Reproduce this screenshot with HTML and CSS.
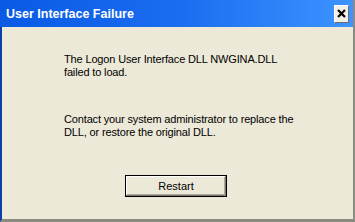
FILE: index.html
```html
<!DOCTYPE html>
<html>
<head>
<meta charset="utf-8">
<link rel="stylesheet" href="styles.css">
</head>
<body>
<div class="window">
  <div class="titlebar">
    <span class="title">User Interface Failure</span>
    <span class="close"><svg width="9" height="9" viewBox="0 0 9 9"><path d="M1 1L8 8M8 1L1 8" stroke="#000" stroke-width="2.2" fill="none"/></svg></span>
  </div>
  <div class="content">
    <p class="msg">The Logon User Interface DLL NWGINA.DLL<br>failed to load.</p>
    <p class="msg msg2">Contact your system administrator to replace the<br>DLL, or restore the original DLL.</p>
    <div class="actions">
      <div class="button">Restart</div>
    </div>
  </div>
</div>
</body>
</html>
```
FILE: styles.css
```css
html, body {
  margin: 0;
  padding: 0;
  width: 355px;
  height: 222px;
  overflow: hidden;
  background: #ECE9D8;
}
.window {
  width: 355px;
  height: 222px;
  box-sizing: border-box;
  display: flex;
  flex-direction: column;
  border-left: 2px solid #0A3FA8;
  border-right: 2px solid #8A8C80;
  border-bottom: 3px solid #8A8C80;
  background: #ECE9D8;
  font-family: "Liberation Sans", Arial, sans-serif;
}
.titlebar {
  height: 27px;
  flex: none;
  display: flex;
  align-items: center;
  justify-content: space-between;
  padding: 0 4px 0 6px;
  margin-left: -2px;
  background: linear-gradient(to right, #0A5AE4 0%, #1A6CF0 50%, #3D93FF 100%);
}
.title {
  color: #fff;
  font-weight: bold;
  font-size: 12.5px;
}
.close {
  width: 15px;
  height: 18px;
  box-sizing: border-box;
  background: #F2F0E6;
  border-top: 1px solid #fff;
  border-left: 1px solid #fff;
  border-right: 1px solid #6C6C6C;
  border-bottom: 1px solid #6C6C6C;
  display: flex;
  align-items: center;
  justify-content: center;
}
.content {
  flex: 1;
  padding: 26px 0 0 62px;
  color: #000;
}
.msg {
  margin: 0;
  font-size: 11px;
  line-height: 13px;
  letter-spacing: -0.15px;
}
.msg2 {
  margin-top: 34px;
}
.actions {
  margin-top: 36px;
  margin-left: -62px;
  padding-right: 3px;
  display: flex;
  justify-content: center;
}
.button {
  width: 102px;
  height: 22px;
  box-sizing: border-box;
  border: 1px solid #000;
  box-shadow: inset -1px -1px 0 #7A7A70, inset 1px 1px 0 #fff, inset -2px -2px 0 #ACA899;
  background: #ECE9D8;
  display: flex;
  align-items: center;
  justify-content: center;
  font-size: 11px;
  color: #000;
}
```
